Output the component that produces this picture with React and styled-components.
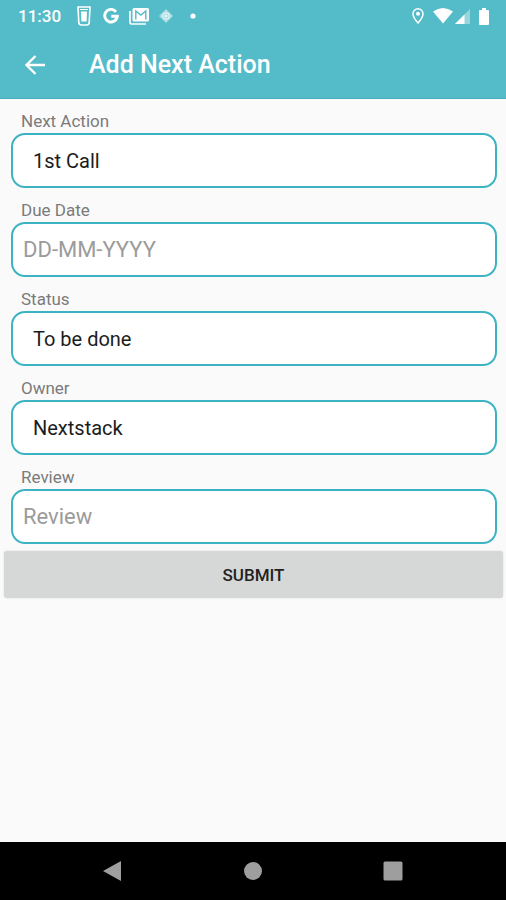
import React, { useState } from 'react';
import styled, { createGlobalStyle, css } from 'styled-components';

const GlobalStyle = createGlobalStyle`
  * {
    box-sizing: border-box;
  }
  body {
    margin: 0;
    background: #fafafa;
    font-family: Roboto, 'Liberation Sans', sans-serif;
  }
`;

const Screen = styled.div`
  display: flex;
  flex-direction: column;
  min-height: 100vh;
`;

const Header = styled.header`
  background: #54bbc9;
  border-bottom: 1px solid #45adbc;
  color: #fff;
`;

const StatusBar = styled.div`
  display: flex;
  align-items: center;
  justify-content: space-between;
  height: 32px;
  padding: 0 17px 0 18px;
`;

const StatusGroup = styled.div`
  display: flex;
  align-items: center;
  gap: ${props => props.$gap}px;
`;

const Clock = styled.time`
  font-size: 17px;
  font-weight: 500;
  line-height: 32px;
`;

const Glyph = styled.svg`
  display: block;
  flex: none;
  fill: currentColor;
`;

const AppBar = styled.div`
  display: flex;
  align-items: center;
  gap: 38px;
  height: 66px;
  padding: 0 19px;
`;

const IconButton = styled.button`
  display: grid;
  place-items: center;
  width: 32px;
  height: 32px;
  padding: 0;
  border: 0;
  background: none;
  color: inherit;
`;

const Title = styled.h1`
  margin: 0;
  font-size: 25px;
  font-weight: 500;
  line-height: 32px;
`;

const Form = styled.form`
  display: flex;
  flex: 1;
  flex-direction: column;
  padding: 10px 3px 10px 4px;
`;

const Fields = styled.div`
  display: flex;
  flex-direction: column;
  gap: 10px;
  padding: 0 6px 7px 7px;
`;

const Field = styled.div`
  display: flex;
  flex-direction: column;
`;

const Label = styled.label`
  padding-left: 10px;
  color: #7b7b7b;
  font-size: 17px;
  line-height: 24px;
`;

const control = css`
  width: 100%;
  height: 55px;
  margin: 0;
  border: 2px solid #3cb3c3;
  border-radius: 14px;
  background: #fff;
  font-family: inherit;
  outline: none;
`;

const Select = styled.select`
  ${control}
  appearance: none;
  padding: 0 20px;
  color: #1c1c1c;
  font-size: 20px;
`;

const Input = styled.input`
  ${control}
  padding: 0 10px;
  color: #1c1c1c;
  font-size: 22px;

  &::placeholder {
    color: #9b9b9b;
    opacity: 1;
  }
`;

const SubmitButton = styled.button`
  height: 47px;
  border: 0;
  border-radius: 3px;
  background: #d6d8d7;
  box-shadow: 0 0 2px #d6d8d7;
  color: #222;
  font-family: inherit;
  font-size: 17px;
  font-weight: 500;
  text-transform: uppercase;
`;

const NavBar = styled.nav`
  display: flex;
  align-items: center;
  justify-content: space-between;
  height: 58px;
  padding: 0 97px 0 96px;
  background: #000;
`;

const NavButton = styled(IconButton)`
  color: #9e9e9e;
`;

const CupIcon = () => (
  <Glyph width="14" height="20" viewBox="0 0 14 20">
    <path d="M1 1h12l-.8 15.500q-.2 2.500-2.500 2.500H4.300Q2 19 1.800 16.500z" fill="none" stroke="currentColor" strokeWidth="1.600" />
    <path d="M4 5.500h6l-.4 10H4.400z" />
    <path d="M3 3.500h8" stroke="currentColor" strokeWidth="1" />
  </Glyph>
);

const GoogleIcon = () => (
  <Glyph width="16" height="16" viewBox="0 0 16 16">
    <path d="M13 3.800A6.300 6.300 0 1 0 14.300 8.300H8.300" fill="none" stroke="currentColor" strokeWidth="2.900" />
  </Glyph>
);

const MailIcon = () => (
  <Glyph width="20" height="17" viewBox="0 0 20 17">
    <path d="M1 3v11.500Q1 16 2.500 16H17" fill="none" stroke="currentColor" strokeWidth="1.700" />
    <path d="M5 0h13.500Q20 0 20 1.500v10.500q0 1.500-1.500 1.500H5Q3.500 13.500 3.500 12V1.500Q3.500 0 5 0z" />
    <path d="M6.800 11.500V3l5 4 5-4v8.500" fill="none" stroke="#54bbc9" strokeWidth="1.400" />
  </Glyph>
);

const DiamondIcon = () => (
  <Glyph width="14" height="14" viewBox="0 0 14 14">
    <path d="M7 0l7 7-7 7-7-7z" opacity=".5" />
    <circle cx="7" cy="7" r="3.200" fill="none" stroke="currentColor" strokeWidth="1.200" opacity=".6" />
    <circle cx="7" cy="7" r="1.300" opacity=".8" />
  </Glyph>
);

const DotIcon = () => (
  <Glyph width="6" height="6" viewBox="0 0 6 6">
    <circle cx="3" cy="3" r="2.600" />
  </Glyph>
);

const PinIcon = () => (
  <Glyph width="12" height="16" viewBox="0 0 12 16">
    <path d="M6 .8a5 5 0 0 1 5 5C11 9.500 6 15 6 15S1 9.500 1 5.800a5 5 0 0 1 5-5z" fill="none" stroke="currentColor" strokeWidth="1.500" />
    <circle cx="6" cy="5.800" r="2" />
  </Glyph>
);

const WifiIcon = () => (
  <Glyph width="20" height="16" viewBox="0 0 20 16">
    <path d="M0 3.500Q10-3.500 20 3.500L10 15.500z" />
  </Glyph>
);

const SignalIcon = () => (
  <Glyph width="15" height="15" viewBox="0 0 15 15">
    <path d="M15 0v15H0z" opacity=".4" />
    <path d="M9.500 5.500V15H0z" />
  </Glyph>
);

const BatteryIcon = () => (
  <Glyph width="10" height="17" viewBox="0 0 10 17">
    <path d="M3 0h4v2h2q1 0 1 1v13q0 1-1 1H1q-1 0-1-1V3q0-1 1-1h2z" />
  </Glyph>
);

const BackArrow = () => (
  <Glyph width="20" height="20" viewBox="0 0 20 20">
    <path d="M20 10H1.500M10.500 1L1.500 10l9 9" fill="none" stroke="currentColor" strokeWidth="2.300" />
  </Glyph>
);

const fields = [
  { id: 'nextAction', label: 'Next Action', options: ['1st Call'] },
  { id: 'dueDate', label: 'Due Date', placeholder: 'DD-MM-YYYY' },
  { id: 'status', label: 'Status', options: ['To be done'] },
  { id: 'owner', label: 'Owner', options: ['Nextstack'] },
  { id: 'review', label: 'Review', placeholder: 'Review' },
];

const initialValues = {
  nextAction: '1st Call',
  dueDate: '',
  status: 'To be done',
  owner: 'Nextstack',
  review: '',
};

function App() {
  const [values, setValues] = useState(initialValues);

  const handleChange = e => {
    setValues({ ...values, [e.target.id]: e.target.value });
  };

  return (
    <Screen>
      <GlobalStyle />
      <Header>
        <StatusBar>
          <StatusGroup $gap={16}>
            <Clock>11:30</Clock>
            <StatusGroup $gap={17}>
              <StatusGroup $gap={10}>
                <StatusGroup $gap={12}>
                  <CupIcon />
                  <GoogleIcon />
                </StatusGroup>
                <MailIcon />
                <DiamondIcon />
              </StatusGroup>
              <DotIcon />
            </StatusGroup>
          </StatusGroup>
          <StatusGroup $gap={9}>
            <PinIcon />
            <StatusGroup $gap={2}>
              <WifiIcon />
              <SignalIcon />
            </StatusGroup>
            <BatteryIcon />
          </StatusGroup>
        </StatusBar>
        <AppBar>
          <IconButton type="button" aria-label="Back">
            <BackArrow />
          </IconButton>
          <Title>Add Next Action</Title>
        </AppBar>
      </Header>
      <Form onSubmit={e => e.preventDefault()}>
        <Fields>
          {fields.map(({ id, label, options, placeholder }) => (
            <Field key={id}>
              <Label htmlFor={id}>{label}</Label>
              {options ? (
                <Select id={id} value={values[id]} onChange={handleChange}>
                  {options.map(option => (
                    <option key={option}>{option}</option>
                  ))}
                </Select>
              ) : (
                <Input id={id} value={values[id]} placeholder={placeholder} onChange={handleChange} />
              )}
            </Field>
          ))}
        </Fields>
        <SubmitButton type="submit">Submit</SubmitButton>
      </Form>
      <NavBar>
        <NavButton type="button" aria-label="Back">
          <Glyph width="20" height="22" viewBox="0 0 20 22">
            <path d="M19 1v20L1 11z" />
          </Glyph>
        </NavButton>
        <NavButton type="button" aria-label="Home">
          <Glyph width="18" height="18" viewBox="0 0 18 18">
            <circle cx="9" cy="9" r="9" />
          </Glyph>
        </NavButton>
        <NavButton type="button" aria-label="Recent apps">
          <Glyph width="20" height="20" viewBox="0 0 20 20">
            <rect x=".5" y=".5" width="19" height="19" rx="1.500" />
          </Glyph>
        </NavButton>
      </NavBar>
    </Screen>
  );
}

export default App;
